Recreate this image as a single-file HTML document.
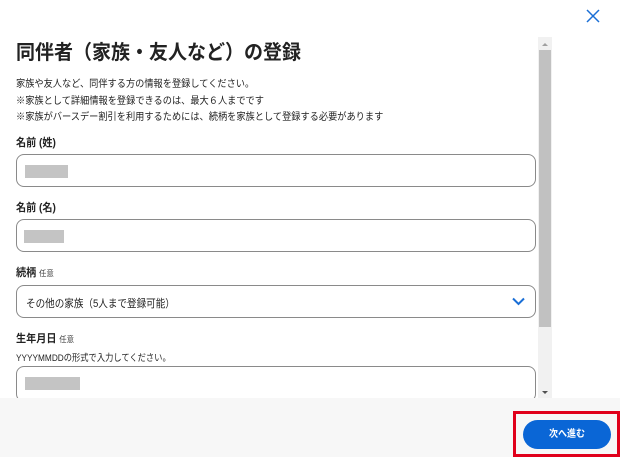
<!DOCTYPE html>
<html><head><meta charset="utf-8"><style>
*{margin:0;padding:0;box-sizing:border-box}
body{width:620px;height:457px;overflow:hidden;background:#fff;font-family:"Liberation Sans","Noto Sans CJK JP",sans-serif;color:#222;position:relative}
.a{position:absolute}
.s{transform:scaleX(0.92);transform-origin:left center;display:inline-block;white-space:nowrap}
.t{font-size:20px;font-weight:bold;left:16px;top:36px;white-space:nowrap}
.p{font-size:10px;left:16px;white-space:nowrap}
.l{font-size:11px;font-weight:bold;left:16px;white-space:nowrap}
.l small{font-size:8px;font-weight:normal;color:#444}
.in{left:16px;width:520px;height:33px;border:1px solid #8a8a8a;border-radius:8px;background:#fff}
.ph{background:#c4c4c4;height:13px;top:10px;position:absolute}
</style></head><body>
<svg class="a" style="left:586px;top:9px" width="14" height="14" viewBox="0 0 14 14"><path d="M1 1L13 13M13 1L1 13" stroke="#1a6fd6" stroke-width="1.5"/></svg>
<div class="a t"><span class="s" style="transform:scaleX(0.95)">同伴者（家族・友人など）の登録</span></div>
<div class="a p" style="top:75px"><span class="s">家族や友人など、同伴する方の情報を登録してください。</span></div>
<div class="a p" style="top:92px"><span class="s">※家族として詳細情報を登録できるのは、最大６人までです</span></div>
<div class="a p" style="top:108px"><span class="s">※家族がバースデー割引を利用するためには、続柄を家族として登録する必要があります</span></div>
<div class="a l" style="top:134px"><span class="s">名前 (姓)</span></div>
<div class="a in" style="top:154px"><div class="ph" style="left:8px;width:43px"></div></div>
<div class="a l" style="top:199px"><span class="s">名前 (名)</span></div>
<div class="a in" style="top:219px"><div class="ph" style="left:7px;width:40px"></div></div>
<div class="a l" style="top:264px"><span class="s">続柄 <small>任意</small></span></div>
<div class="a in" style="top:285px"><span class="s" style="position:absolute;left:9px;top:9px;font-size:11px;transform:scaleX(0.87)">その他の家族（5人まで登録可能）</span>
<svg style="position:absolute;right:10px;top:11px" width="13" height="9" viewBox="0 0 13 9"><path d="M1 1.5L6.5 7L12 1.5" stroke="#1a6fd6" stroke-width="2" fill="none"/></svg></div>
<div class="a l" style="top:330px"><span class="s">生年月日 <small>任意</small></span></div>
<div class="a p" style="top:350px;font-size:9.5px"><span class="s" style="transform:scaleX(0.87)">YYYYMMDDの形式で入力してください。</span></div>
<div class="a in" style="top:366px;height:36px"><div class="ph" style="left:8px;width:55px;top:10px"></div></div>
<div class="a" style="left:538px;top:37px;width:14px;height:361px;background:#f1f1f1"></div>
<div class="a" style="left:539px;top:50px;width:12px;height:277px;background:#c1c1c1"></div>
<div class="a" style="left:542px;top:40px;width:0;height:0;border:3px solid transparent;border-bottom-color:#a0a0a0"></div>
<div class="a" style="left:542px;top:391px;width:0;height:0;border:3px solid transparent;border-top-color:#505050"></div>
<div class="a" style="left:0;top:398px;width:620px;height:59px;background:#f7f7f7"></div>
<div class="a" style="left:513px;top:411px;width:107px;height:46px;border:3px solid #e0001b"></div>
<div class="a" style="left:523px;top:420px;width:88px;height:29px;border-radius:15px;background:#0a66d6;color:#fff;font-size:10px;font-weight:bold;text-align:center;line-height:29px"><span style="display:inline-block;transform:scaleX(0.9)">次へ進む</span></div>
</body></html>
